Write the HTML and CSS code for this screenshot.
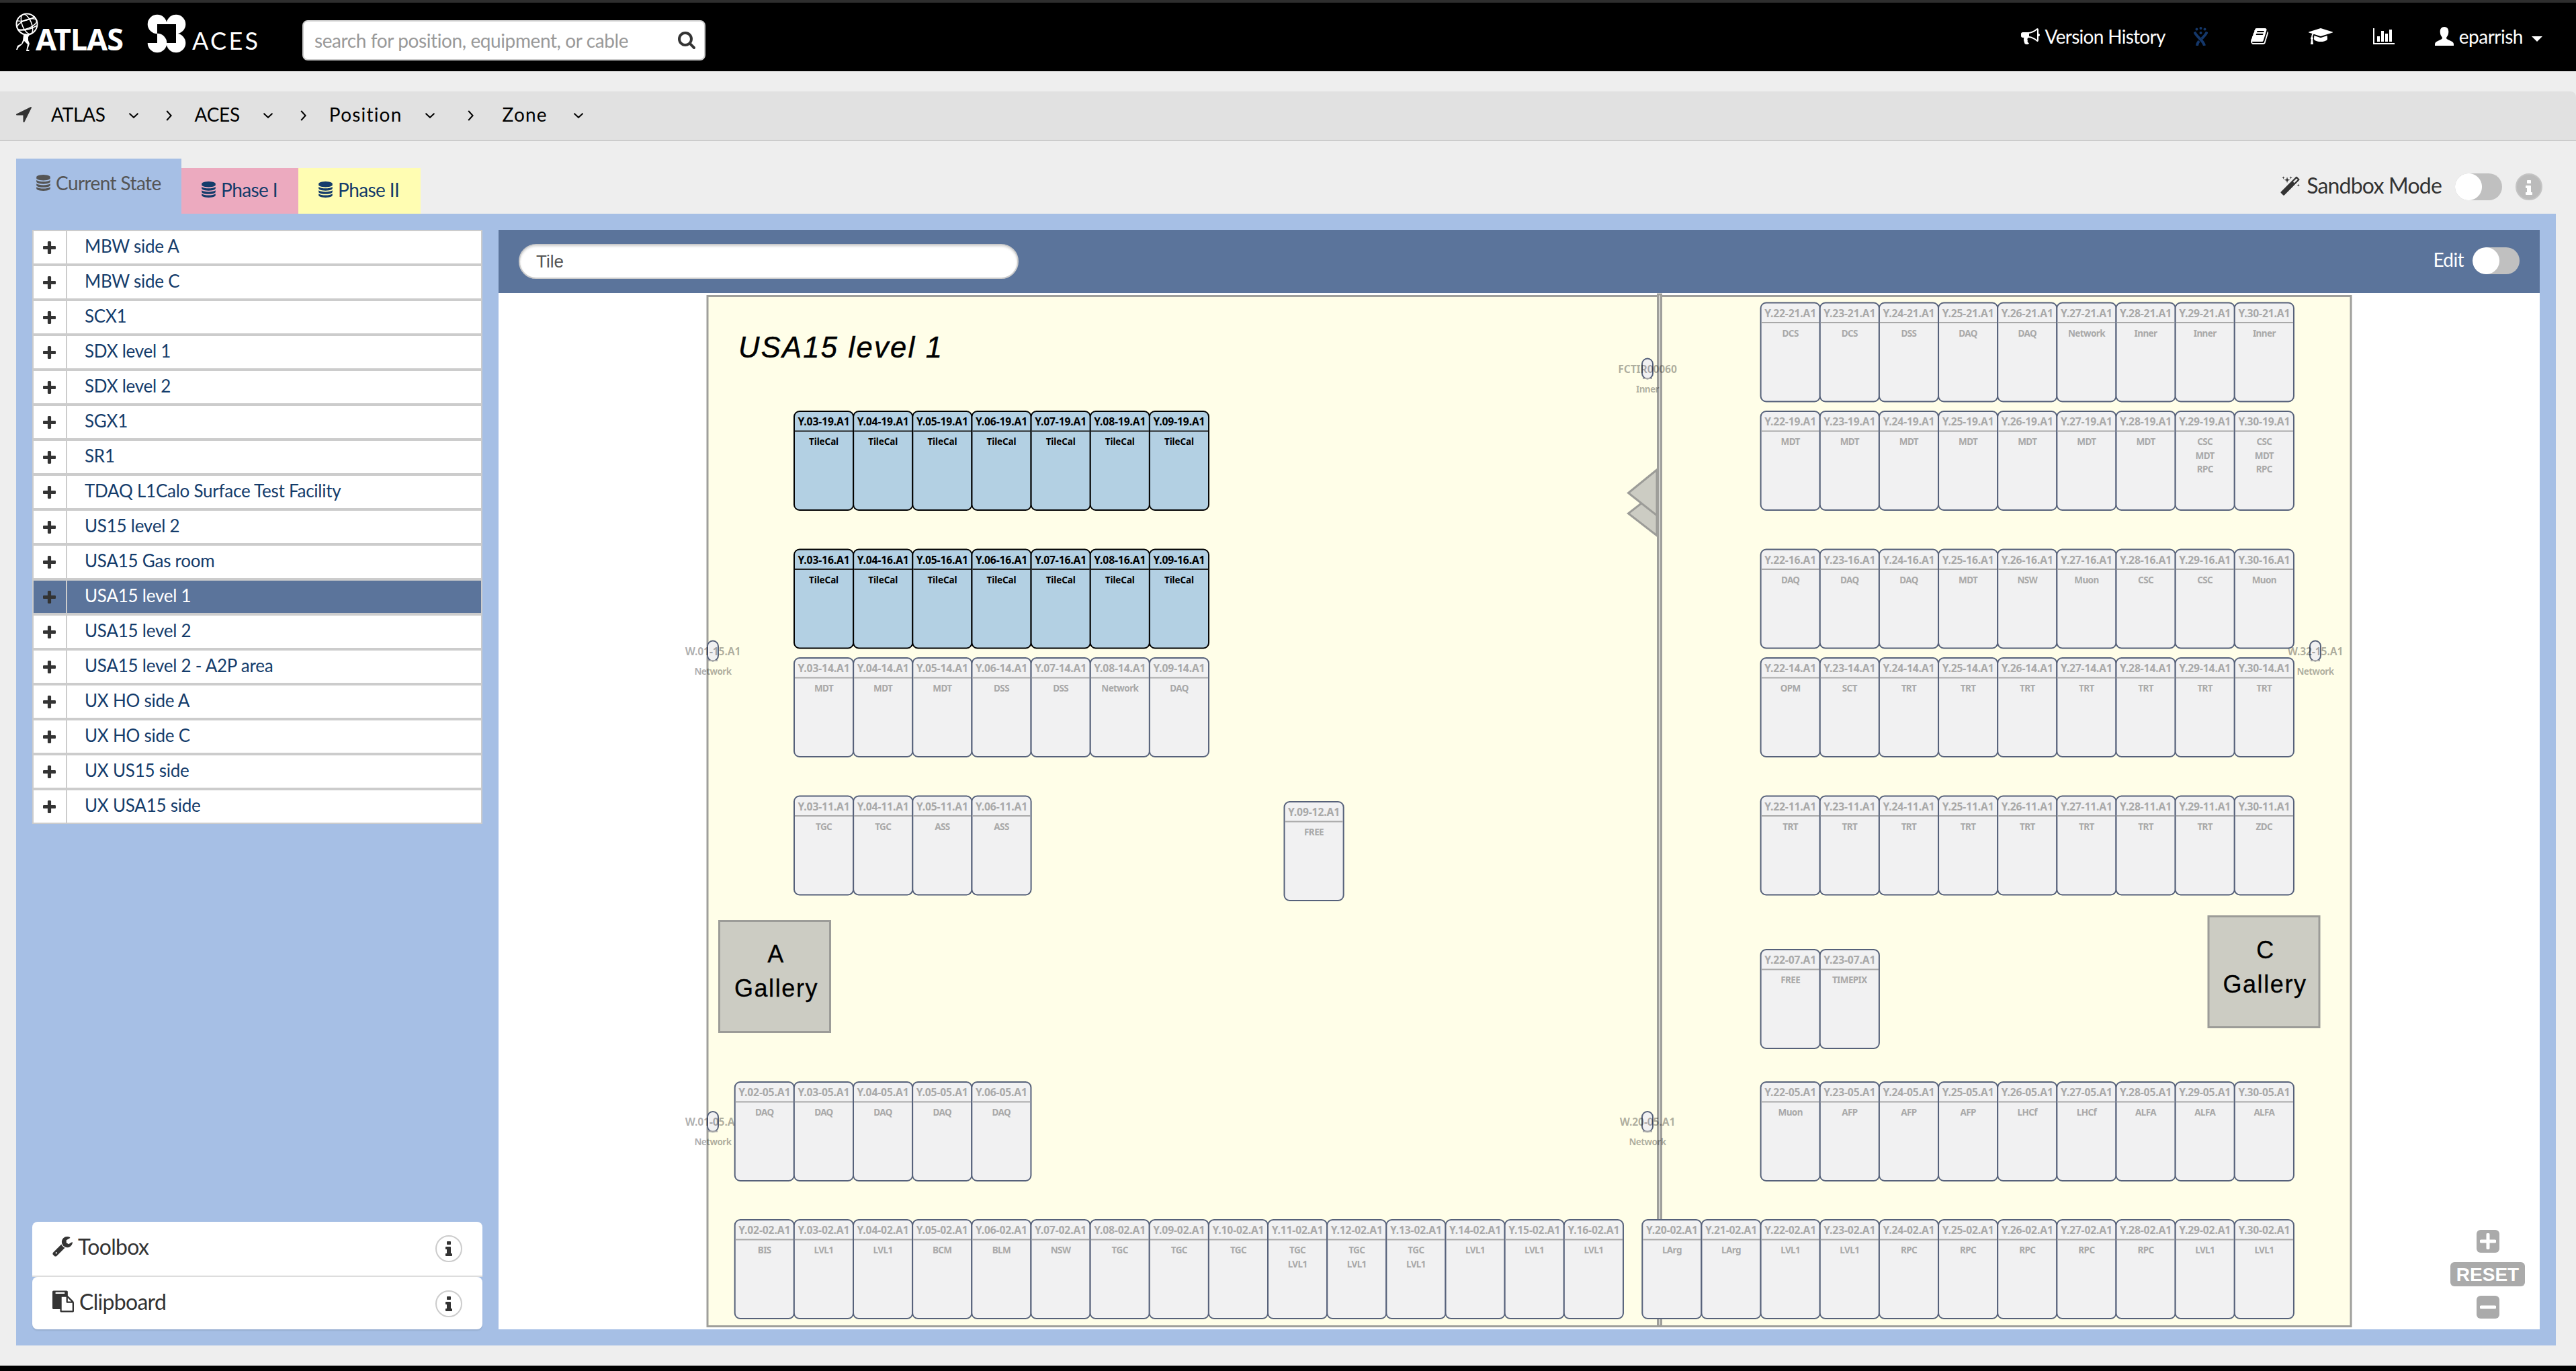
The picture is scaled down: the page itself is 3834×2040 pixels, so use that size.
FILE: index.html
```html
<!DOCTYPE html>
<html lang="en">
<head>
<meta charset="utf-8">
<title>ATLAS ACES - Zone USA15 level 1</title>
<link rel="stylesheet" href="styles.css">
</head>
<body>
<svg class="sprite" aria-hidden="true">
  <symbol id="plus" viewBox="192 128 1408 1408"><path d="M1600 736v192q0 40-28 68t-68 28h-416v416q0 40-28 68t-68 28h-192q-40 0-68-28t-28-68v-416h-416q-40 0-68-28t-28-68v-192q0-40 28-68t68-28h416v-416q0-40 28-68t68-28h192q40 0 68 28t28 68v416h416q40 0 68 28t28 68z"/></symbol>
  <symbol id="search" viewBox="64 128 1664 1664"><path d="M1216 832q0-185-131.500-316.500t-316.500-131.500-316.500 131.500-131.500 316.500 131.500 316.500 316.500 131.500 316.500-131.500 131.500-316.500zm512 832q0 52-38 90t-90 38q-54 0-90-38l-343-342q-179 124-399 124-143 0-273.500-55.500t-225-150-150-225-55.500-273.500 55.500-273.500 150-225 225-150 273.500-55.500 273.500 55.500 225 150 150 225 55.500 273.500q0 220-124 399l343 343q37 37 37 90z"/></symbol>
  <symbol id="database" viewBox="128 0 1536 1792"><path d="M896 768q237 0 443-43t325-127v170q0 69-103 128t-280 93.500-385 34.500-385-34.500-280-93.500-103-128v-170q119 84 325 127t443 43zm0 768q237 0 443-43t325-127v170q0 69-103 128t-280 93.500-385 34.500-385-34.500-280-93.500-103-128v-170q119 84 325 127t443 43zm0-384q237 0 443-43t325-127v170q0 69-103 128t-280 93.500-385 34.500-385-34.500-280-93.500-103-128v-170q119 84 325 127t443 43zm0-1152q208 0 385 34.500t280 93.500 103 128v128q0 69-103 128t-280 93.500-385 34.500-385-34.500-280-93.500-103-128v-128q0-69 103-128t280-93.500 385-34.500z"/></symbol>
  <symbol id="wrench" viewBox="64 128 1664 1664"><path d="M448 1472q0-26-19-45t-45-19-45 19-19 45 19 45 45 19 45-19 19-45zm644-420l-682 682q-37 37-90 37-52 0-91-37l-106-108q-38-36-38-90 0-53 38-91l681-681q39 98 114.500 173.500t173.500 114.500zm634-435q0 39-23 106-47 134-164.500 217.500t-258.500 83.500q-185 0-316.500-131.500t-131.500-316.500 131.500-316.500 316.500-131.500q58 0 121.500 16.500t107.500 46.500q16 11 16 28t-16 28l-293 169v224l193 107q5-3 79-48.500t135.500-81 70.500-35.500q15 0 23.500 10t8.500 25z"/></symbol>
  <symbol id="paste" viewBox="0 0 1792 1792"><path d="M768 1664h896v-640h-416q-40 0-68-28t-28-68v-416h-384v1152zm256-1440v-64q0-13-9.500-22.500t-22.500-9.500h-704q-13 0-22.500 9.500t-9.500 22.500v64q0 13 9.500 22.500t22.500 9.500h704q13 0 22.500-9.500t9.500-22.500zm256 672h299l-299-299v299zm512 128v672q0 40-28 68t-68 28h-960q-40 0-68-28t-28-68v-160h-544q-40 0-68-28t-28-68v-1344q0-40 28-68t68-28h1088q40 0 68 28t28 68v328q21 13 36 28l408 408q28 28 48 76t20 88z"/></symbol>
  <symbol id="info" viewBox="576 128 640 1408"><path d="M1216 1344v128q0 26-19 45t-45 19h-512q-26 0-45-19t-19-45v-128q0-26 19-45t45-19h64v-384h-64q-26 0-45-19t-19-45v-128q0-26 19-45t45-19h384q26 0 45 19t19 45v576h64q26 0 45 19t19 45zm-128-1152v192q0 26-19 45t-45 19h-256q-26 0-45-19t-19-45v-192q0-26 19-45t45-19h256q26 0 45 19t19 45z"/></symbol>
  <symbol id="bullhorn" viewBox="0 128 1792 1536"><path d="M1664 640q53 0 90.500 37.500t37.500 90.500-37.500 90.500-90.500 37.500v384q0 52-38 90t-90 38q-417-347-812-380-58 19-91 66t-31 100.500 40 92.500q-20 33-23 65.500t6 58 33.500 55 48 50 61.500 50.500q-29 58-111.500 83t-168.500 11.500-132-55.500q-7-23-29.500-87.500t-32-94.500-23-89-15-101 3.500-98.500 22-110.500h-122q-66 0-113-47t-47-113v-192q0-66 47-113t113-47h480q435 0 896-384 52 0 90 38t38 90v384zm-128 604v-954q-394 302-768 343v270q377 42 768 341z"/></symbol>
  <symbol id="book" viewBox="64 128 1664 1536"><path d="M1703 478q40 57 18 129l-275 906q-19 64-76.500 107.500t-122.500 43.500h-923q-77 0-148.500-53.500t-99.500-131.500q-24-67-2-127 0-4 3-27t4-37q1-8-3-21.500t-3-19.500q2-11 8-21t16.500-23.500 16.500-23.500q23-38 45-91.500t30-91.500q3-10 .5-30t-.5-28q3-11 17-28t17-23q21-36 42-92t25-90q1-9-2.500-32t.5-28q4-13 22-30.500t22-22.500q19-26 42.500-84.500t27.500-96.500q1-8-3-25.500t-2-26.500q2-8 9-18t18-23 17-21q8-12 16.500-30.500t15-35 16-36 19.500-32 26.500-23.500 36-11.500 47.500 5.500l-1 3q38-9 51-9h761q74 0 114 56t18 130l-274 906q-36 119-71.500 153.500t-128.500 34.500h-869q-27 0-38 15-11 16-1 43 24 70 144 70h923q29 0 56-15.500t35-41.500l300-987q7-22 5-57 38 15 59 43zm-1064 2q-4 13 2 22.500t20 9.500h608q13 0 25.500-9.500t16.500-22.500l21-64q4-13-2-22.500t-20-9.500h-608q-13 0-25.500 9.500t-16.500 22.500zm-83 256q-4 13 2 22.500t20 9.500h608q13 0 25.500-9.500t16.500-22.500l21-64q4-13-2-22.500t-20-9.500h-608q-13 0-25.500 9.500t-16.500 22.500z"/></symbol>
  <symbol id="cap" viewBox="0 128 2304 1536"><path d="M1774 836l18 316q4 69-82 128t-235 93.500-323 34.500-323-34.500-235-93.500-82-128l18-316 574 181q22 7 48 7t48-7zm530-324q0 23-22 31l-1120 352q-4 1-10 1t-10-1l-652-206q-43 34-71 111.500t-34 178.500q63 36 63 109 0 69-58 107l58 433q2 14-8 25-9 11-24 11h-192q-15 0-24-11-10-11-8-25l58-433q-58-38-58-107 0-73 65-111 11-207 98-330l-333-104q-22-8-22-31t22-31l1120-352q4-1 10-1t10 1l1120 352q22 8 22 31z"/></symbol>
  <symbol id="chart" viewBox="0 128 2048 1536"><path d="M640 896v512h-256v-512h256zm384-512v1024h-256v-1024h256zm1024 1152v128h-2048v-1536h128v1408h1920zm-640-896v768h-256v-768h256zm384-384v1152h-256v-1152h256z"/></symbol>
  <symbol id="magic" viewBox="0 0 1664 1637"><path d="M1190 581l293-293-107-107-293 293zm447-293q0 27-18 45l-1286 1286q-18 18-45 18t-45-18l-198-198q-18-18-18-45t18-45l1286-1286q18-18 45-18t45 18l198 198q18 18 18 45zm-1351-190l98 30-98 30-30 98-30-98-98-30 98-30 30-98zm350 162l196 60-196 60-60 196-60-196-196-60 196-60 60-196zm930 478l98 30-98 30-30 98-30-98-98-30 98-30 30-98zm-640-640l98 30-98 30-30 98-30-98-98-30 98-30 30-98z"/></symbol>
  <symbol id="arrow" viewBox="190 256 1412 1408"><path d="M1593 349l-640 1280q-17 35-57 35-5 0-15-2-22-5-35.500-22.500t-13.500-39.500v-576h-576q-22 0-39.500-13.500t-22.500-35.500 4-42 29-30l1280-640q13-7 29-7 27 0 45 19 15 14 18.500 34.500t-6.500 39.500z"/></symbol>
  <symbol id="user" viewBox="0 0 28 28"><path d="M14 0c4.200 0 6.300 3 6.300 7.200 0 3.200-1.100 6-2.700 7.900-.9 1.100-.7 2.600.5 3.200l6.600 3.200c2 1 3.300 2.300 3.300 4.200V28H0v-2.300c0-1.900 1.300-3.200 3.300-4.200l6.600-3.200c1.200-.6 1.400-2.100.5-3.200-1.600-1.900-2.700-4.700-2.700-7.900C7.700 3 9.800 0 14 0z"/></symbol>
  <symbol id="down" viewBox="0 0 16 8"><path d="M1.500 .8L8 6.800L14.500 .8" fill="none" stroke="currentColor" stroke-width="2"/></symbol>
  <symbol id="next" viewBox="0 0 9 16"><path d="M1.200 1L7.600 8L1.200 15" fill="none" stroke="currentColor" stroke-width="2"/></symbol>
  <symbol id="jira" viewBox="0 0 21 28"><g fill="none" stroke="currentColor"><path d="M1.200 7.500C3 11.500 5.500 14 9 17.500c3 3 6 6 7 10.500" stroke-width="4"/><path d="M19.800 7.500c-1.800 4-4.300 6.500-7.800 10" stroke-width="4"/><path d="M8 21c-1.500 1.800-2.800 4-3 7" stroke-width="4"/></g><circle cx="4.500" cy="3.500" r="2"/><circle cx="10.500" cy="2" r="2"/><circle cx="16.500" cy="3.500" r="2"/><circle cx="10.500" cy="9" r="2"/></symbol>
</svg>

<header class="topbar">
  <svg class="brand" viewBox="0 4 400 102" role="img" aria-label="ATLAS ACES">
    <g fill="none" stroke="#fff" stroke-width="1.500">
      <circle cx="40" cy="36" r="15.500" stroke-width="2"/>
      <ellipse cx="40" cy="36" rx="7" ry="15.500" transform="rotate(-22 40 36)"/>
      <ellipse cx="40" cy="36" rx="15.500" ry="6.500" transform="rotate(-22 40 36)"/>
      <path d="M26 31Q36 33 52 25M28 45Q42 46 55 38"/>
    </g>
    <path d="M30 48l5 4 3-2 3 2 5-3-4 6 0 5 2 5-3 9h3l-1 2h-4l2-10-5-5-3 5-6 5-1 3-2 0 2-6 6-3 2-5 1-8-4-4z" fill="#fff"/>
    <text class="logo-atlas" x="53" y="75" textLength="131">ATLAS</text>
    <g fill="#fff">
      <circle cx="234" cy="36" r="14.300"/><circle cx="262" cy="36" r="14.300"/><circle cx="262" cy="64" r="14.300"/>
    </g>
    <rect x="234" y="36" width="28" height="28" fill="#000"/>
    <path d="M234 49.700A14.300 14.300 0 1 1 219.700 64H234z" fill="#fff"/>
    <text class="logo-aces" x="286" y="74" textLength="98">ACES</text>
  </svg>
  <div class="searchbox">
    <input class="search-input" type="text" placeholder="search for position, equipment, or cable">
    <svg class="i-search"><use href="#search"/></svg>
  </div>
  <nav class="topnav">
    <a class="nav-item"><svg class="i-bullhorn"><use href="#bullhorn"/></svg><span>Version History</span></a>
    <a class="nav-item jira"><svg class="i-jira"><use href="#jira"/></svg></a>
    <a class="nav-item"><svg class="i-book"><use href="#book"/></svg></a>
    <a class="nav-item"><svg class="i-cap"><use href="#cap"/></svg></a>
    <a class="nav-item"><svg class="i-chart"><use href="#chart"/></svg></a>
    <a class="nav-item"><svg class="i-user"><use href="#user"/></svg><span class="username">eparrish</span><i class="caret"></i></a>
  </nav>
</header>

<nav class="breadcrumb">
  <svg class="i-arrow"><use href="#arrow"/></svg>
  <span class="crumb caps">ATLAS</span><svg class="i-down"><use href="#down"/></svg><svg class="i-next"><use href="#next"/></svg>
  <span class="crumb caps">ACES</span><svg class="i-down"><use href="#down"/></svg><svg class="i-next"><use href="#next"/></svg>
  <span class="crumb">Position</span><svg class="i-down"><use href="#down"/></svg><svg class="i-next wide"><use href="#next"/></svg>
  <span class="crumb last">Zone</span><svg class="i-down"><use href="#down"/></svg>
</nav>

<div class="tabbar">
  <div class="tab current"><svg class="i-db"><use href="#database"/></svg>Current State</div>
  <div class="tab phase1"><svg class="i-db"><use href="#database"/></svg>Phase I</div>
  <div class="tab phase2"><svg class="i-db"><use href="#database"/></svg>Phase II</div>
  <div class="sandbox">
    <svg class="i-magic"><use href="#magic"/></svg>
    <span>Sandbox Mode</span>
    <i class="toggle"></i>
    <span class="info muted"><svg class="i-info"><use href="#info"/></svg></span>
  </div>
</div>

<main class="workspace">
  <aside class="sidebar">
    <ul class="zones" id="zones"></ul>
    <div class="tools">
      <div class="tool"><svg class="i-wrench"><use href="#wrench"/></svg><span>Toolbox</span><span class="info"><svg class="i-info"><use href="#info"/></svg></span></div>
      <div class="tool"><svg class="i-paste"><use href="#paste"/></svg><span>Clipboard</span><span class="info"><svg class="i-info"><use href="#info"/></svg></span></div>
    </div>
  </aside>
  <section class="mapview">
    <div class="maptools">
      <input class="filter" type="text" value="Tile">
      <label class="edit"><span>Edit</span><i class="toggle"></i></label>
    </div>
    <div class="canvas">
      <svg class="plan" id="plan" viewBox="742 436 3038 1542">
        <rect class="floor" x="1053" y="440.500" width="2446" height="1533"/>
        <path class="shade" d="M2466 731L2423.500 764L2466 797z"/>
        <path class="shade" d="M2466 699L2423.500 733.500L2466 767z"/>
        <rect class="wall" x="2467.500" y="438" width="5" height="1535"/>
        <text class="title" x="1099" y="531.500" textLength="303">USA15 level 1</text>
        <rect class="shade" x="1070.500" y="1370.500" width="165" height="165"/>
        <text class="gallery" x="1155" y="1431.500">A</text>
        <text class="gallery" x="1155.500" y="1483">Gallery</text>
        <rect class="shade" x="3287" y="1363.500" width="165" height="165"/>
        <text class="gallery" x="3372" y="1425.500">C</text>
        <text class="gallery" x="3371" y="1477">Gallery</text>
      </svg>
      <div class="zoomer">
        <button class="zbtn"><svg class="i-zoom" viewBox="0 0 24 24"><path d="M12 2V22M2 12H22"/></svg></button>
        <button class="zbtn reset">RESET</button>
        <button class="zbtn"><svg class="i-zoom" viewBox="0 0 24 24"><path d="M2 12H22"/></svg></button>
      </div>
    </div>
  </section>
</main>
<footer class="bottom-edge"></footer>
<script src="map.js"></script>
</body>
</html>
```
FILE: styles.css
```css
* { box-sizing: border-box; }
body {
  margin: 0;
  height: 2040px;
  display: flex;
  flex-direction: column;
  background: #eee;
  color: #333;
  font-family: Lato, "Open Sans", sans-serif;
  font-size: 28px;
  overflow: hidden;
}
svg { fill: currentColor; flex: none; display: block; }
.sprite { position: absolute; width: 0; height: 0; }

/* header */
.topbar { height: 106px; border-top: 4px solid #2e2e2e; background: #000; color: #fff; display: flex; align-items: center; }
.brand { width: 400px; height: 102px; }
.logo-atlas { font: 700 45px "Noto Sans", sans-serif; fill: #fff; }
.logo-aces { font: 400 36px Lato, sans-serif; fill: #fff; }
.searchbox {
  width: 600px; height: 60px; margin: 10px 0 0 50px; padding: 0 13px 0 16px;
  border: 2px solid #ccc; border-radius: 8px; background: #fff;
  display: flex; align-items: center; justify-content: space-between;
}
.search-input { flex: 1; min-width: 0; height: 52px; margin: 0; padding: 0; border: 0; background: none; font: 28px Lato, sans-serif; letter-spacing: -.4px; }
.search-input::placeholder { color: #999; opacity: 1; }
.i-search { width: 26px; height: 26px; color: #333; }
.topnav { margin-left: auto; padding: 0 50px 3px 0; display: flex; align-items: center; letter-spacing: -.7px; }
.nav-item { display: flex; align-items: center; gap: 8px; height: 36px; }
.i-bullhorn { width: 28px; height: 24px; }
.jira { margin-left: 42px; color: #14376a; }
.i-jira { width: 21px; height: 28px; }
.jira + .nav-item { margin-left: 64px; }
.i-book { width: 26px; height: 24px; }
.nav-item + .nav-item:nth-child(n+4) { margin-left: 60px; }
.i-cap { width: 36px; height: 24px; }
.i-chart { width: 32px; height: 24px; }
.i-user { width: 28px; height: 28px; }
.username { letter-spacing: -.5px; }
.caret { margin: 8px 0 0 5px; border: 8px solid transparent; border-top-color: #fff; border-bottom: 0; }

/* breadcrumb */
.breadcrumb {
  height: 74px; margin-top: 30px; padding: 0 0 5px 24px;
  border-bottom: 2px solid #ccc; border-radius: 0 8px 0 0;
  background: #e1e1e1; color: #000;
  display: flex; align-items: center;
}
.i-arrow { width: 23px; height: 23px; color: #333; margin: 2px 29px 0 0; }
.crumb { letter-spacing: 1.200px; margin-right: 33px; }
.crumb.caps { letter-spacing: -.3px; margin-right: 34px; }
.crumb.last { margin: 0 38px 0 9px; }
.i-down { width: 16px; height: 8px; margin-top: 4px; }
.i-next { width: 9px; height: 16px; margin: 4px 34px 0 40px; }
.i-next.wide { margin-left: 48px; }

/* tabs */
.tabbar { height: 108px; padding: 26px 0 0 24px; display: flex; align-items: flex-end; }
.tab { height: 68px; padding: 0 0 4px 30px; display: flex; align-items: center; gap: 8px; color: #143c6b; letter-spacing: -.6px; }
.tab.current { width: 246px; height: 82px; padding-bottom: 10px; background: #a6bfe5; color: #555; }
.tab.phase1 { width: 174px; background: #ecaabf; }
.tab.phase2 { width: 182px; background: #fffdb2; }
.i-db { width: 21px; height: 24px; }
.sandbox { margin-left: auto; padding-right: 50px; height: 80px; display: flex; align-items: center; font-size: 32px; letter-spacing: -.8px; }
.sandbox span:first-of-type { margin: 0 20px 5px 10px; }
.i-magic { width: 29px; height: 29px; margin-bottom: 4px; }
.toggle { width: 70px; height: 40px; border-radius: 20px; background: radial-gradient(circle at 20px 20px, #fff 19.500px, #c0c0c0 20.500px); }
.info { width: 40px; height: 40px; border: 2px solid #ccc; border-radius: 50%; display: flex; align-items: center; justify-content: center; }
.info.muted { margin-left: 20px; background: #bbb; border-color: #c4c4c4; color: #fff; }
.i-info { width: 10px; height: 22px; }
.muted .i-info { margin-top: 2px; }

/* workspace */
.workspace { width: 3780px; height: 1684px; margin-left: 24px; padding: 24px; background: #a6bfe5; display: flex; gap: 24px; }
.sidebar { width: 670px; display: flex; flex-direction: column; justify-content: space-between; }
.zones { list-style: none; margin: 0; padding: 2px; background: #ccc; display: grid; gap: 4px; }
.zone { height: 48px; display: flex; gap: 2px; font-size: 26px; letter-spacing: -.25px; }
.expand { width: 48px; padding-right: 1px; background: #fff; display: grid; place-items: center; }
.i-plus { width: 19px; height: 19px; }
.name { flex: 1; padding: 0 0 5px 26px; background: #fff; color: #143c6b; display: flex; align-items: center; }
.selected .expand, .selected .name { background: #5b749b; }
.selected .name { color: #fff; }
.tools { font-size: 32px; letter-spacing: -.7px; }
.tool { height: 80px; padding: 0 30px 4px; background: #fff; border-radius: 8px; display: flex; align-items: center; gap: 8px; }
.tool:first-child { height: 82px; padding-bottom: 2px; border-bottom: 2px solid #ddd; border-radius: 8px 8px 0 0; }
.tool:last-child { height: 78px; padding-bottom: 0; box-shadow: 0 2px 2px #00000018; }
.tool span:nth-child(2) { margin-bottom: 6px; }
.tool .info { margin: 2px 0 0 auto; }
.i-wrench { width: 30px; height: 30px; margin-bottom: 4px; }
.i-paste { width: 32px; height: 33px; margin-bottom: 6px; }

/* map */
.mapview { flex: 1; display: flex; flex-direction: column; }
.maptools { height: 94px; padding: 0 30px; background: #5b749b; display: flex; align-items: center; justify-content: space-between; }
.filter { width: 744px; height: 52px; padding: 0 0 0 24px; border: 2px solid #ccc; border-radius: 26px; box-shadow: inset 0 2px 3px #0002; color: #555; font: 26px "Liberation Sans", sans-serif; }
.edit { display: flex; align-items: center; gap: 13px; color: #fff; letter-spacing: -.6px; padding-bottom: 3px; }
.edit span { margin-bottom: 4px; }
.canvas { flex: 1; position: relative; background: #fff; }
.plan { width: 3038px; height: 1542px; }
.floor { fill: #fffee8; stroke: #9f9f9b; stroke-width: 3; }
.wall { fill: #d4d4d0; stroke: #9f9f9b; stroke-width: 3; }
.shade { fill: #ccccc3; stroke: #9c9c98; stroke-width: 3; }
.title { font: italic 43.500px "Liberation Sans", sans-serif; fill: #000; stroke: #000; stroke-width: .5px; }
.gallery { font: 36px "Liberation Sans", sans-serif; letter-spacing: 1.600px; text-anchor: middle; fill: #000; stroke: #000; stroke-width: .3px; }
.rack rect { fill: #f1f1f2; stroke: #56617a; stroke-width: 2; }
.rack path { stroke: #a9a9a9; stroke-width: 2; }
.rack text { fill: #a9a9a9; font: 700 13.500px "Noto Sans", sans-serif; text-anchor: middle; letter-spacing: -.6px; }
.rack .label { font-size: 15.700px; letter-spacing: -.15px; }
.rack.match rect { fill: #b3d0e3; stroke: #000; }
.rack.match path { stroke: #222; }
.rack.match text { fill: #000; }
.rack.match text:not(.label) { letter-spacing: -.1px; }
.rack.pin text { fill: #00000052; }
.zoomer { position: absolute; right: 22px; bottom: 16px; width: 111px; display: flex; flex-direction: column; align-items: center; gap: 14px; }
.zbtn { width: 34px; height: 34px; margin: 0; padding: 0; border: 0; border-radius: 6px; background: #aaa; color: #fff; display: grid; place-items: center; }
.zbtn.reset { width: 111px; height: 36px; padding-top: 2px; font: 700 28px "Liberation Sans", sans-serif; }
.i-zoom { width: 24px; height: 24px; fill: none; stroke: #fff; stroke-width: 5; stroke-linecap: round; }
.bottom-edge { margin-top: auto; height: 8px; background: #000; }
```
FILE: map.js
```javascript
const zones = ["MBW side A", "MBW side C", "SCX1", "SDX level 1", "SDX level 2", "SGX1", "SR1",
  "TDAQ L1Calo Surface Test Facility", "US15 level 2", "USA15 Gas room", "USA15 level 1",
  "USA15 level 2", "USA15 level 2 - A2P area", "UX HO side A", "UX HO side C", "UX US15 side", "UX USA15 side"];

document.getElementById("zones").innerHTML = zones.map(z =>
  `<li class="zone${z === "USA15 level 1" ? " selected" : ""}"><span class="expand"><svg class="i-plus"><use href="#plus"/></svg></span><span class="name">${z}</span></li>`
).join("");

// Wall-mounted racks: label, system, centre x, top y
const pins = [
  ["W.01-15.A1", "Network", 1061, 953.5],
  ["W.32-15.A1", "Network", 3446, 953.5],
  ["W.01-05.A1", "Network", 1061, 1654],
  ["W.20-05.A1", "Network", 2452, 1654],
  ["FCTIR00060", "Inner", 2452, 533.5]
];

// Rack rows: row number, first column, left x, top y, systems per rack
const PITCH = 88.15;
const rows = [
  ["21", 22, 2620.6, 450.5, "DCS DCS DSS DAQ DAQ Network Inner Inner Inner"],
  ["19", 3, 1182, 612, "TileCal TileCal TileCal TileCal TileCal TileCal TileCal"],
  ["19", 22, 2620.6, 612, "MDT MDT MDT MDT MDT MDT MDT CSC/MDT/RPC CSC/MDT/RPC"],
  ["16", 3, 1182, 817.5, "TileCal TileCal TileCal TileCal TileCal TileCal TileCal"],
  ["16", 22, 2620.6, 817.5, "DAQ DAQ DAQ MDT NSW Muon CSC CSC Muon"],
  ["14", 3, 1182, 979, "MDT MDT MDT DSS DSS Network DAQ"],
  ["14", 22, 2620.6, 979, "OPM SCT TRT TRT TRT TRT TRT TRT TRT"],
  ["11", 3, 1182, 1184.5, "TGC TGC ASS ASS"],
  ["11", 22, 2620.6, 1184.5, "TRT TRT TRT TRT TRT TRT TRT TRT ZDC"],
  ["12", 9, 1911.5, 1193, "FREE"],
  ["07", 22, 2620.6, 1413, "FREE TIMEPIX"],
  ["05", 2, 1093.7, 1610, "DAQ DAQ DAQ DAQ DAQ"],
  ["05", 22, 2620.6, 1610, "Muon AFP AFP AFP LHCf LHCf ALFA ALFA ALFA"],
  ["02", 2, 1093.7, 1815, "BIS LVL1 LVL1 BCM BLM NSW TGC TGC TGC TGC/LVL1 TGC/LVL1 TGC/LVL1 LVL1 LVL1 LVL1"],
  ["02", 20, 2444.3, 1815, "LArg LArg LVL1 LVL1 RPC RPC RPC RPC RPC LVL1 LVL1"]
];

function rack(kind, label, systems, x, y, w, h) {
  const cx = x + w / 2;
  const lines = systems.map((s, i) => `<text x="${cx}" y="${y + 50 + i * 20.7}">${s}</text>`).join("");
  return `<g class="rack ${kind}"><rect x="${x}" y="${y}" width="${w}" height="${h}" rx="8"/>` +
    `<path d="M${x + 1} ${y + 29.5}h${w - 2}"/><text class="label" x="${cx}" y="${y + 21}">${label}</text>${lines}</g>`;
}

let out = pins.map(([label, sys, cx, y]) => rack("pin", label, [sys], cx - 8, y, 16, 30)).join("");
for (const [row, first, x, y, list] of rows) {
  list.split(" ").forEach((sys, i) => {
    const label = `Y.${String(first + i).padStart(2, "0")}-${row}.A1`;
    out += rack(sys === "TileCal" ? "match" : "", label, sys.split("/"), x + i * PITCH, y, PITCH, 147);
  });
}
document.getElementById("plan").insertAdjacentHTML("beforeend", out);
```
